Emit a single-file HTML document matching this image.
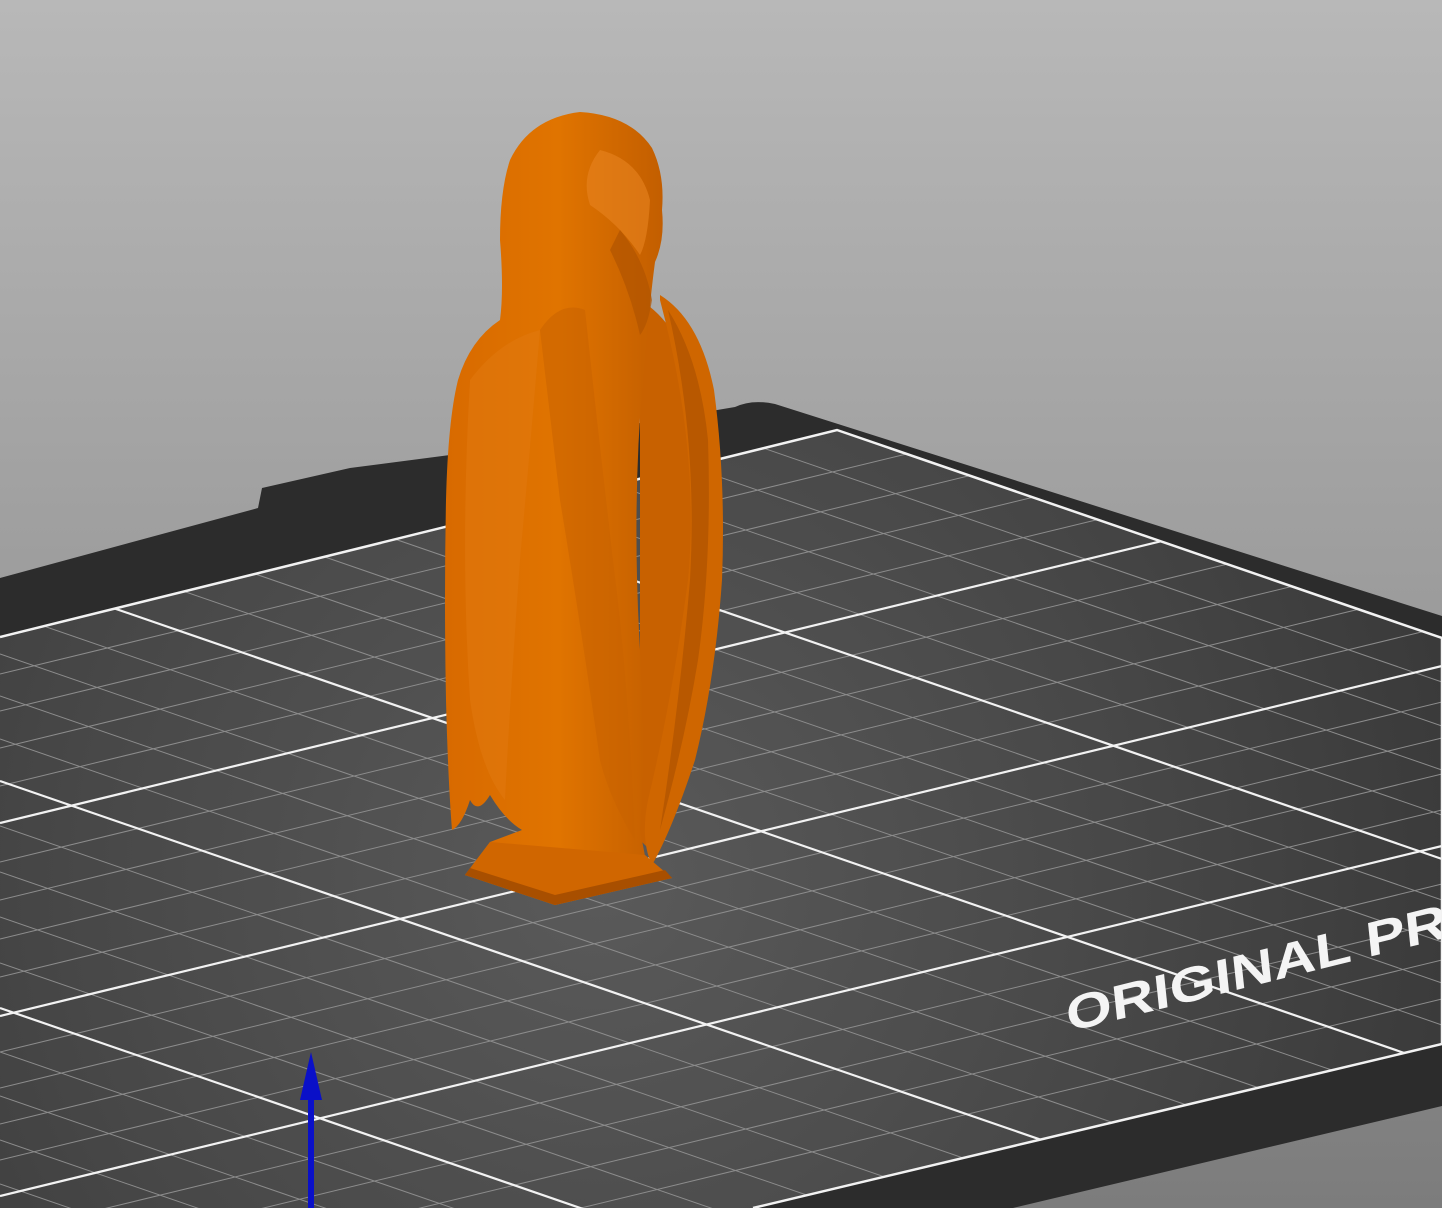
<!DOCTYPE html>
<html><head><meta charset="utf-8"><style>
html,body{margin:0;padding:0;width:1442px;height:1208px;overflow:hidden;background:#999}
svg{display:block;position:absolute;left:0;top:0}
</style></head><body>
<svg width="1442" height="1208" viewBox="0 0 1442 1208" xmlns="http://www.w3.org/2000/svg">
<defs>
<linearGradient id="bg" x1="0" y1="0" x2="0" y2="1">
<stop offset="0" stop-color="#b8b8b8"/><stop offset="0.5" stop-color="#9c9c9c"/><stop offset="1" stop-color="#7c7c7c"/>
</linearGradient>
<radialGradient id="gf" cx="600" cy="880" r="900" gradientUnits="userSpaceOnUse">
<stop offset="0" stop-color="#5a5a5a"/><stop offset="0.6" stop-color="#474747"/><stop offset="1" stop-color="#393939"/>
</radialGradient>
<linearGradient id="eg" x1="0" y1="0" x2="1" y2="0">
<stop offset="0" stop-color="#d86a00"/><stop offset="0.5" stop-color="#e07400"/><stop offset="1" stop-color="#c05c00"/>
</linearGradient>
<clipPath id="gc"><polygon points="0,637 837,430 1442,638 1442,1044 753,1208 0,1208"/></clipPath>
</defs>
<rect width="1442" height="1208" fill="url(#bg)"/>
<path d="M0,578 L258,508 L262,488 L350,468 L450,455 L735,407 Q752,399 775,404 L1442,616 L1442,1106 L1013,1208 L0,1208 Z" fill="#2c2c2c"/>
<polygon points="0,637 837,430 1442,638 1442,1044 753,1208 0,1208" fill="url(#gf)"/>
<g clip-path="url(#gc)">
<g stroke="#8c8c8c" stroke-width="1">
<path d="M0,185l1442,497M0,229l1442,497M0,273l1442,497M0,318l1442,497M0,403l1442,497M0,445l1442,497M0,486l1442,497M0,528l1442,497M0,611l1442,497M0,654l1442,497M0,696l1442,497M0,739l1442,497M0,826l1442,497M0,872l1442,497M0,917l1442,497M0,963l1442,497M0,1052l1442,497M0,1096l1442,497M0,1140l1442,497M0,1184l1442,497"/>
<path d="M0,674l1442,-350M0,711l1442,-350M0,748l1442,-350M0,786l1442,-350M0,862l1442,-350M0,900l1442,-350M0,939l1442,-350M0,977l1442,-350M0,1052l1442,-350M0,1088l1442,-350M0,1124l1442,-350M0,1160l1442,-350M0,1234l1442,-350M0,1272l1442,-350M0,1310l1442,-350M0,1349l1442,-350"/>
</g>
<g stroke="#f2f2f2" stroke-width="2.2">
<path d="M0,362l1442,497M0,569l1442,497M0,781l1442,497M0,1008l1442,497"/>
<path d="M0,823l1442,-350M0,1016l1442,-350M0,1196l1442,-350"/>
</g>
<text x="0" y="0" transform="translate(1068,1032) rotate(-14) skewX(-8) scale(1,0.8)" font-family="Liberation Sans, sans-serif" font-weight="bold" font-size="60" fill="#f4f4f4">ORIGINAL PR</text>
</g>
<polyline points="0,637 837,430 1442,638 1442,1044 753,1208" fill="none" stroke="#f2f2f2" stroke-width="2.5"/>
<!-- eagle -->
<path d="M640,300 Q690,330 700,420 Q705,560 690,680 Q670,790 650,850 L640,840 Z" fill="#c86100"/>
<path d="M580,112 Q630,115 652,148 Q665,175 662,210 Q665,240 655,262 Q650,300 648,330 Q630,480 640,650 Q645,760 640,830 L645,856 L672,878 L555,905 L465,875 L490,842 L522,830 Q505,820 490,795 Q478,815 470,800 Q462,825 452,830 Q448,780 446,700 Q444,600 446,500 Q448,420 458,380 Q470,340 500,320 Q504,290 500,240 Q500,190 510,160 Q530,118 580,112 Z" fill="url(#eg)"/>
<path d="M660,295 Q700,320 714,390 Q726,480 722,580 Q715,680 695,760 Q672,830 652,865 Q640,840 648,800 Q672,700 688,580 Q700,450 660,300 Z" fill="#cf6600"/>
<path d="M668,310 Q700,360 708,440 Q712,560 698,660 Q685,740 660,830 Q680,700 690,580 Q698,440 668,310 Z" fill="#b25500" opacity="0.8"/>
<path d="M540,330 Q560,300 585,310 Q600,450 620,620 Q630,720 635,840 Q610,800 600,760 Q580,620 560,500 Z" fill="#c96200" opacity="0.55"/>
<path d="M600,150 Q640,160 650,200 Q648,240 640,255 Q620,225 590,205 Q580,175 600,150 Z" fill="#e88420" opacity="0.6"/>
<path d="M620,230 Q645,260 652,300 Q648,325 640,335 Q630,290 610,250 Z" fill="#b05400" opacity="0.7"/>
<path d="M470,380 Q500,340 540,330 Q530,450 520,560 Q510,700 505,800 Q480,770 470,700 Q460,550 470,380 Z" fill="#e27a10" opacity="0.5"/>
<polygon points="465,875 490,842 645,855 672,878 555,905" fill="#d06600"/>
<polygon points="465,875 555,905 672,878 665,870 555,895 470,868" fill="#a84f00"/>
<rect x="308" y="1098" width="6" height="110" fill="#0a10c8"/>
<polygon points="311,1052 300,1100 322,1100" fill="#0a10c8"/>
</svg>
</body></html>
